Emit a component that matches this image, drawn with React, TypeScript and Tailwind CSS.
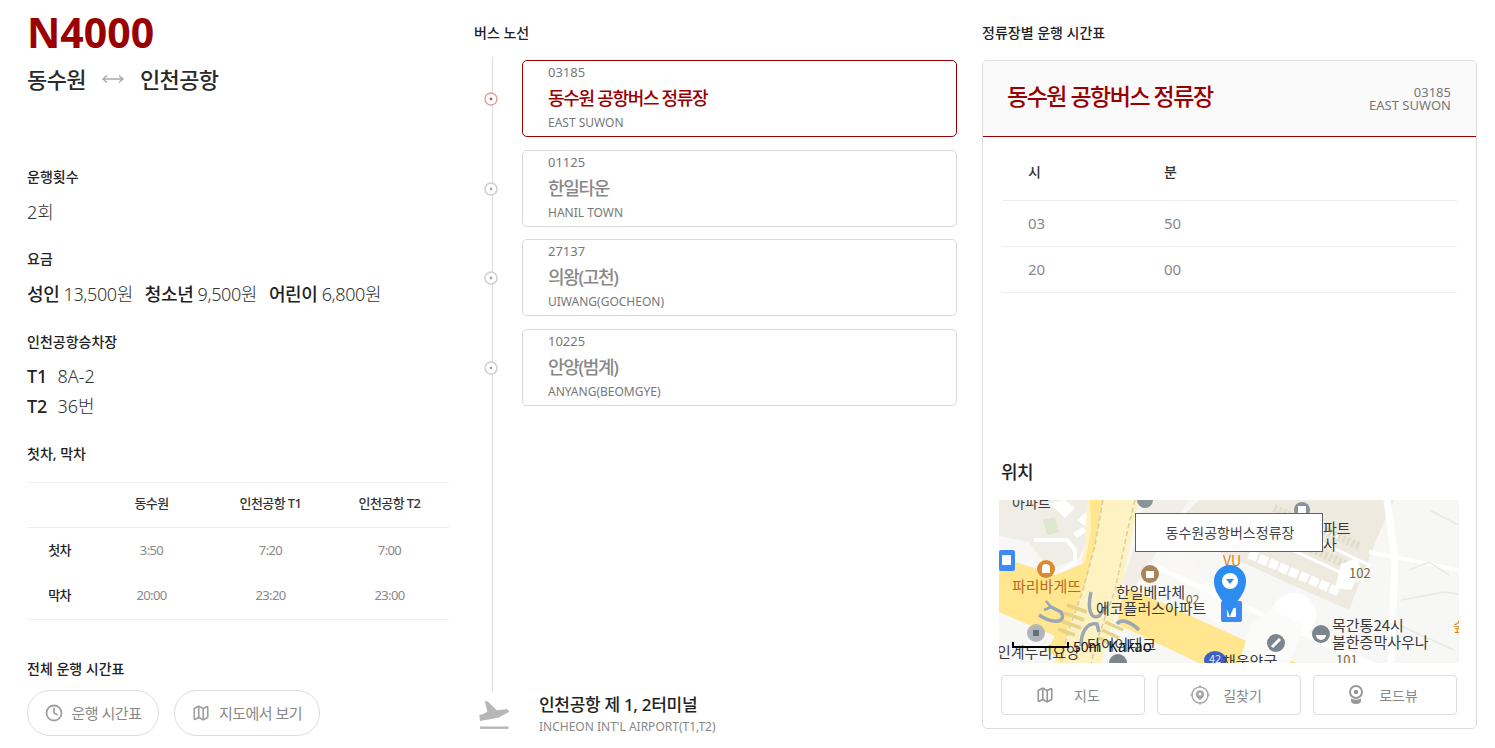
import React from "react";
import { Clock, Map as MapIcon } from "lucide-react";

const font = { fontFamily: '"Noto Sans", "Noto Sans CJK KR", sans-serif' };

function StopDot({ active }: { active?: boolean }) {
  const c = active ? "#dfa3a3" : "#cfcfcf";
  const d = active ? "#c0504d" : "#a8a8a8";
  return (
    <svg width="14" height="14" viewBox="0 0 14 14" className="block">
      <circle cx="7" cy="7" r="6" fill="#fff" stroke={c} strokeWidth="1.5" />
      <circle cx="7" cy="7" r="1.4" fill={d} />
    </svg>
  );
}

const stops = [
  { code: "03185", name: "동수원 공항버스 정류장", en: "EAST SUWON", active: true, mb: "mb-[13px]" },
  { code: "01125", name: "한일타운", en: "HANIL TOWN", active: false, mb: "mb-[12px]" },
  { code: "27137", name: "의왕(고천)", en: "UIWANG(GOCHEON)", active: false, mb: "mb-[13px]" },
  { code: "10225", name: "안양(범계)", en: "ANYANG(BEOMGYE)", active: false, mb: "" },
];

function Label({ children }: { children: React.ReactNode }) {
  return <div className="text-[14px] leading-[20px] font-medium text-[#222]">{children}</div>;
}

function LeftColumn() {
  return (
    <div className="w-[422px] ml-[27px] shrink-0 flex flex-col">
      <div className="text-[41px] leading-[44px] font-bold text-[#9a0000] mt-[10px]">N4000</div>
      <div className="flex items-center mt-[7px] h-[36px] text-[22px] font-medium text-[#2a2a2a] tracking-[-0.6px]">
        <span>동수원</span>
        <svg width="22" height="10" viewBox="0 0 22 10" className="mx-[16px]" fill="none" stroke="#a9a9a9" strokeWidth="1.4">
          <path d="M1 5h20M5 1.5L1 5l4 3.5M17 1.5L21 5l-4 3.5" />
        </svg>
        <span>인천공항</span>
      </div>
      <div className="mt-[70px]"><Label>운행횟수</Label></div>
      <div className="mt-[12px] text-[18px] leading-[26px] font-light text-[#333]">2회</div>

      <div className="mt-[24px]"><Label>요금</Label></div>
      <div className="mt-[12px] text-[18px] leading-[26px] font-light text-[#333] tracking-[-0.4px] flex gap-[12px]">
        <span><b className="font-medium text-[#222]">성인</b> 13,500원</span>
        <span><b className="font-medium text-[#222]">청소년</b> 9,500원</span>
        <span><b className="font-medium text-[#222]">어린이</b> 6,800원</span>
      </div>

      <div className="mt-[25px]"><Label>인천공항승차장</Label></div>
      <div className="mt-[9px] text-[18px] leading-[30px] font-light text-[#333]">
        <div><b className="font-medium text-[#222] mr-[10px]">T1</b>8A-2</div>
        <div><b className="font-medium text-[#222] mr-[10px]">T2</b>36번</div>
      </div>

      <div className="mt-[23px]"><Label>첫차, 막차</Label></div>
      <div className="mt-[18px] border-y border-[#eeeeee] text-[13px] tracking-[-0.6px]">
        <div className="grid grid-cols-[65px_1fr_1fr_1fr] h-[45px] pb-[2px] items-center text-center border-b border-[#eeeeee] font-medium text-[#333]">
          <span></span><span>동수원</span><span>인천공항 T1</span><span>인천공항 T2</span>
        </div>
        <div className="grid grid-cols-[65px_1fr_1fr_1fr] h-[46px] items-center text-center text-[#888]">
          <span className="font-medium text-[#222]">첫차</span><span>3:50</span><span>7:20</span><span>7:00</span>
        </div>
        <div className="grid grid-cols-[65px_1fr_1fr_1fr] h-[45px] pb-[2px] items-center text-center text-[#888]">
          <span className="font-medium text-[#222]">막차</span><span>20:00</span><span>23:20</span><span>23:00</span>
        </div>
      </div>

      <div className="mt-[39px]"><Label>전체 운행 시간표</Label></div>
      <div className="mt-[11px] flex gap-[15px] text-[15px] text-[#888] tracking-[-0.5px]">
        <div className="w-[132px] h-[46px] rounded-[23px] border border-[#dddddd] flex items-center justify-center gap-[9px]">
          <Clock size={18} color="#a0a0a0" strokeWidth={2.4} />
          <span>운행 시간표</span>
        </div>
        <div className="w-[146px] h-[46px] rounded-[23px] border border-[#dddddd] flex items-center justify-center gap-[9px]">
          <MapIcon size={18} color="#a0a0a0" strokeWidth={2.2} />
          <span>지도에서 보기</span>
        </div>
      </div>
    </div>
  );
}

function PlaneIcon() {
  return (
    <svg width="36" height="32" viewBox="0 0 36 32" fill="#b7b7b7" className="block">
      <path d="M2.3 15 L3 21 L21.3 17.7 L32.3 11.7 L30.3 9 L19.7 10.3 L11.3 1.7 L7.7 .7 L10.3 11.7 L5.7 14.3 Z" />
      <rect x="3" y="26.5" width="28.5" height="2.4" />
    </svg>
  );
}

function MiddleColumn() {
  return (
    <div className="w-[483px] ml-[25px] shrink-0 flex flex-col">
      <div className="mt-[23px]"><Label>버스 노선</Label></div>
      <div className="relative mt-[14px] h-[635px]">
        <div className="absolute left-[18px] top-0 bottom-0 w-px bg-[#dddddd]" />
        <div className="pt-[3px] flex flex-col relative">
          {stops.map((s) => (
            <div key={s.code} className={`flex items-center ${s.mb}`}>
              <div className="w-[48px] pl-[10px] shrink-0"><StopDot active={s.active} /></div>
              <div className={`flex-1 h-[77px] rounded-[5px] border ${s.active ? "border-[#9a0000]" : "border-[#d9d9d9]"} pl-[25px] flex flex-col`}>
                <div className="text-[13px] leading-[22px] text-[#777]">{s.code}</div>
                <div className={`text-[18px] leading-[26px] font-medium tracking-[-1.3px] mt-[2px] ${s.active ? "text-[#9a0000]" : "text-[#888]"}`}>{s.name}</div>
                <div className="text-[12px] leading-[20px] mt-[2px] text-[#777]">{s.en}</div>
              </div>
            </div>
          ))}
        </div>
      </div>
      <div className="flex items-center mt-[2px]">
        <div className="w-[65px] shrink-0 pl-[3px]">
          <PlaneIcon />
        </div>
        <div>
          <div className="text-[17px] leading-[22px] font-medium text-[#222] tracking-[-0.3px]">인천공항 제 1, 2터미널</div>
          <div className="text-[12px] leading-[20px] mt-[1px] text-[#888]">INCHEON INT'L AIRPORT(T1,T2)</div>
        </div>
      </div>
    </div>
  );
}

function KakaoMap() {
  return (
    <svg width="460" height="163" viewBox="0 0 460 163" className="block" style={{ fontFamily: '"Noto Sans CJK KR", sans-serif' }}>
      <rect width="460" height="163" fill="#f7f7f6" />
      {/* top-left beige block */}
      <polygon points="0,0 100,0 88,40 80,58 50,70 30,42 0,36" fill="#f0ede6" />
      <polygon points="50,3 66,0 76,8 66,18" fill="#ffffff" />
      <polygon points="78,20 90,10 96,15 86,26" fill="#ffffff" />
      <polygon points="74,33 84,27 88,31 78,38" fill="#ffffff" />
      <polygon points="44,20 56,17 60,32 48,35" fill="#dbe8cd" />
      <path d="M35 40 H68 L76 50 V62 L62 72" stroke="#ffffff" strokeWidth="4" fill="none" />
      {/* centre pale road */}
      <polygon points="88,0 140,0 132,40 120,100 102,163 55,163 66,120 78,85 86,45" fill="#fff2c2" />
      {/* saturated arms */}
      <polygon points="91,0 104,0 96,45 86,85 68,130 64,163 48,150 56,136 0,112 0,58 16,62 56,75 86,63 92,30" fill="#ffe68f" />
      <polygon points="130,88 245,140 298,163 200,163 118,124 122,100" fill="#ffe68f" />
      {/* road dashes */}
      <path d="M104 0 L96 45 L84 90 L68 135 L62 163" stroke="#d5cca8" strokeWidth="1.5" strokeDasharray="5 3" fill="none" />
      <path d="M136 0 L128 33 L116 90 L98 140 L92 163" stroke="#d5cca8" strokeWidth="1.5" strokeDasharray="5 3" fill="none" />
      {/* crosswalks */}
      <path d="M68 105 L88 112 M65 113 L85 120 M62 121 L82 128 M59 129 L76 135" stroke="#e8d288" strokeWidth="3.5" fill="none" />
      <path d="M106 122 L124 130 M103 130 L120 138 M100 138 L114 145" stroke="#e8d288" strokeWidth="3.5" fill="none" />
      {/* turn arrows */}
      <path d="M40 115 C55 125 68 122 62 112 L50 106" stroke="#9aa7b5" strokeWidth="3.5" fill="none" />
      <path d="M47 101 L52 107 L45 110" stroke="#9aa7b5" strokeWidth="2.5" fill="none" />
      <path d="M92 92 C88 110 92 120 100 116 L108 106" stroke="#9aa7b5" strokeWidth="3.5" fill="none" />
      <path d="M82 146 C82 132 88 122 98 124 L100 132" stroke="#9aa7b5" strokeWidth="3.5" fill="none" />
      <path d="M118 124 C122 118 132 122 140 130" stroke="#9aa7b5" strokeWidth="3.5" fill="none" />
      {/* block with apartment */}
      <polygon points="138,40 145,0 190,0 135,88 122,84" fill="#f2eee7" />
      <polygon points="146,70 175,52 195,60 205,82 190,96 165,92" fill="#f9f8f5" />
      <polygon points="205,80 230,95 222,125 195,108" fill="#fbfbfa" />
      {/* right apartment block */}
      <polygon points="170,30 200,0 355,0 395,0 378,38 350,110 300,88 220,52" fill="#efeadf" />
      <path d="M262 14 L370 65 L358 82 M250 30 L345 74 M300 20 L342 38" stroke="#ffffff" strokeWidth="3" fill="none" />
      <path d="M275 8 L360 46 M262 26 L350 66" stroke="#e2dccd" strokeWidth="8" strokeDasharray="3 2" fill="none" />
      <path d="M250 54 L340 92" stroke="#ffffff" strokeWidth="9" strokeDasharray="9 2" fill="none" />
      <polygon points="342,64 358,58 362,70 352,90 336,88" fill="#ffffff" />
      <path d="M150 64 L430 190" stroke="#ffffff" strokeWidth="5" fill="none" />
      <circle cx="295" cy="115" r="22" fill="#ffffff" />
      <polygon points="272,110 305,125 290,165 240,163 252,125" fill="#fbfbfa" />
      {/* right road */}
      <path d="M388 0 L396 60 L392 163" stroke="#ffffff" strokeWidth="7" fill="none" />
      <path d="M370 52 L460 70" stroke="#ffffff" strokeWidth="4" fill="none" />
      <path d="M402 100 L445 92 L460 94 M400 125 L455 150 M410 70 L430 62 L450 75 M430 10 L460 25" stroke="#e9e9e7" strokeWidth="1.5" fill="none" />
      {/* POI icons */}
      <circle cx="47" cy="69" r="9" fill="#d98a32" />
      <path d="M43 73v-5a4 4 0 0 1 8 0v5z" fill="#ffffff" />
      <rect x="0" y="50" width="16" height="21" rx="2" fill="#3d8af0" />
      <rect x="3" y="55" width="9" height="10" rx="1" fill="#ffffff" />
      <circle cx="151" cy="74" r="9" fill="#a8855a" />
      <rect x="147" y="71" width="8" height="7" fill="#ffffff" />
      <circle cx="37" cy="133" r="9" fill="#b2b6ba" />
      <rect x="34" y="130" width="6" height="6" fill="#66707a" />
      <circle cx="303" cy="10" r="8" fill="#8a939a" />
      <rect x="299" y="6" width="8" height="8" fill="#ffffff" />
      <circle cx="277" cy="143" r="9" fill="#7b858c" />
      <path d="M273 147l8-8" stroke="#ffffff" strokeWidth="3" />
      <circle cx="322" cy="134" r="9" fill="#7b858c" />
      <path d="M317 135a5 5 0 0 0 10 0z" fill="#ffffff" />
      <circle cx="119" cy="163" r="9" fill="#7b858c" />
      <circle cx="146" cy="0" r="8" fill="#8a939a" />
      <ellipse cx="216" cy="160" rx="11" ry="9" fill="#3f5fc4" />
      <text x="216" y="163" fontSize="11" fill="#dfe6ff" textAnchor="middle">42</text>
      {/* labels */}
      <g fontSize="15" fill="#3a3a3a">
        <text x="13" y="8" fontSize="14">아파트</text>
        <text x="13" y="92" fill="#b96a1c">파리바게뜨</text>
        <text x="117" y="98">한일베라체</text>
        <text x="97" y="114">에코플러스아파트</text>
        <text x="187" y="104" fontSize="12" fill="#7a6542">02</text>
        <text x="-2" y="158">인계누리요양</text>
        <text x="88" y="150">타이어테크</text>
        <text x="333" y="131">목간통24시</text>
        <text x="333" y="148">불한증막사우나</text>
        <text x="223" y="167">채움약국</text>
        <text x="337" y="165" fontSize="13" fill="#7a6542">101</text>
        <text x="350" y="78" fontSize="13" fill="#7a6542">102</text>
        <text x="324" y="34">파트</text>
        <text x="324" y="50">사</text>
      </g>
      <text x="454" y="131" fontSize="13" fill="#d8821f">숲</text>
      <text x="224" y="66" fontSize="14" fill="#d8821f">VU</text>
      {/* scale + logo */}
      <path d="M14 142v6M14 147H69M69 142v6" stroke="#000000" strokeWidth="2" fill="none" />
      <text x="74" y="152" fontSize="14" fill="#111111">50m</text>
      <text x="109" y="152" fontSize="15" fill="#111111">Kakao</text>
      {/* bus marker */}
      <rect x="222" y="101" width="21" height="21" rx="2" fill="#3d8af0" />
      <rect x="228" y="108" width="9" height="9" rx="1" fill="#ffffff" />
      <path d="M231 117 C226 100 215 95 215 81 A16 16 0 0 1 247 81 C247 95 236 100 231 117Z" fill="#2d8cf0" />
      <circle cx="231" cy="81" r="8" fill="#ffffff" />
      <path d="M227 79h8l-4 5z" fill="#2d8cf0" />
      {/* label box */}
      <rect x="136.5" y="13.5" width="187" height="38" fill="#ffffff" stroke="#5a6270" />
      <text x="231" y="38" fontSize="14" fill="#444444" textAnchor="middle">동수원공항버스정류장</text>
    </svg>
  );
}

function RoadviewIcon() {
  return (
    <svg width="16" height="20" viewBox="0 0 16 20" fill="none">
      <circle cx="8" cy="7" r="6" stroke="#999999" strokeWidth="2" />
      <circle cx="8" cy="7" r="2.3" fill="#999999" />
      <path d="M3 13.5v2.5c0 2 2 3 5 3s5-1 5-3v-2.5c-2 1.5-8 1.5-10 0z" fill="#999999" />
    </svg>
  );
}

function RouteIcon() {
  return (
    <svg width="20" height="20" viewBox="0 0 20 20" fill="none">
      <circle cx="10" cy="10" r="8" stroke="#aaaaaa" strokeWidth="1.5" />
      <path d="M10 0v3M10 17v3M0 10h3M17 10h3" stroke="#aaaaaa" strokeWidth="1.2" />
      <circle cx="10" cy="9.5" r="4.2" fill="#a5a5a5" />
      <path d="M7 12l3 3.5 3-3.5z" fill="#a5a5a5" />
      <circle cx="10" cy="9" r="1.5" fill="#ffffff" />
    </svg>
  );
}

function RightColumn() {
  return (
    <div className="w-[495px] ml-[25px] shrink-0 flex flex-col">
      <div className="mt-[23px]"><Label>정류장별 운행 시간표</Label></div>
      <div className="mt-[17px] h-[669px] rounded-[5px] border border-[#dddddd] flex flex-col overflow-hidden">
        <div className="h-[76px] shrink-0 bg-[#fafafa] border-b border-[#9a0000] pl-[24px] pr-[25px] flex items-center justify-between">
          <div className="text-[23px] font-medium text-[#9a0000] tracking-[-1.5px] mb-[4px]">동수원 공항버스 정류장</div>
          <div className="text-right text-[13px] leading-[13px] text-[#777]">
            <div>03185</div>
            <div>EAST SUWON</div>
          </div>
        </div>
        <div className="mx-[19px] text-[15px]">
          <div className="grid grid-cols-[136px_1fr] h-[64px] items-center pl-[26px] pt-[6px] border-b border-[#eeeeee] text-[14px] font-medium text-[#333]">
            <span>시</span><span>분</span>
          </div>
          <div className="grid grid-cols-[136px_1fr] h-[46px] pb-[1px] items-center pl-[26px] border-b border-[#eeeeee] text-[#888]">
            <span>03</span><span>50</span>
          </div>
          <div className="grid grid-cols-[136px_1fr] h-[46px] pb-[1px] items-center pl-[26px] border-b border-[#eeeeee] text-[#888]">
            <span>20</span><span>00</span>
          </div>
        </div>
        <div className="mt-[167px] ml-[18px] text-[18px] leading-[24px] font-medium text-[#222] tracking-[-0.5px]">위치</div>
        <div className="mt-[16px] ml-[16px]"><KakaoMap /></div>
        <div className="mt-[12px] ml-[18px] flex gap-[12px] text-[14px] text-[#888]">
          <div className="w-[144px] h-[40px] rounded-[4px] border border-[#dddddd] flex items-center justify-center gap-[20px] pr-[10px]">
            <MapIcon size={18} color="#999999" strokeWidth={2.2} />
            <span>지도</span>
          </div>
          <div className="w-[144px] h-[40px] rounded-[4px] border border-[#dddddd] flex items-center justify-center gap-[13px] pr-[6px]">
            <RouteIcon />
            <span>길찾기</span>
          </div>
          <div className="w-[144px] h-[40px] rounded-[4px] border border-[#dddddd] flex items-center justify-center gap-[15px] pr-[4px]">
            <RoadviewIcon />
            <span>로드뷰</span>
          </div>
        </div>
      </div>
    </div>
  );
}

export default function App() {
  return (
    <div className="flex w-[1495px] h-[748px] overflow-hidden bg-white" style={font}>
      <LeftColumn />
      <MiddleColumn />
      <RightColumn />
    </div>
  );
}
